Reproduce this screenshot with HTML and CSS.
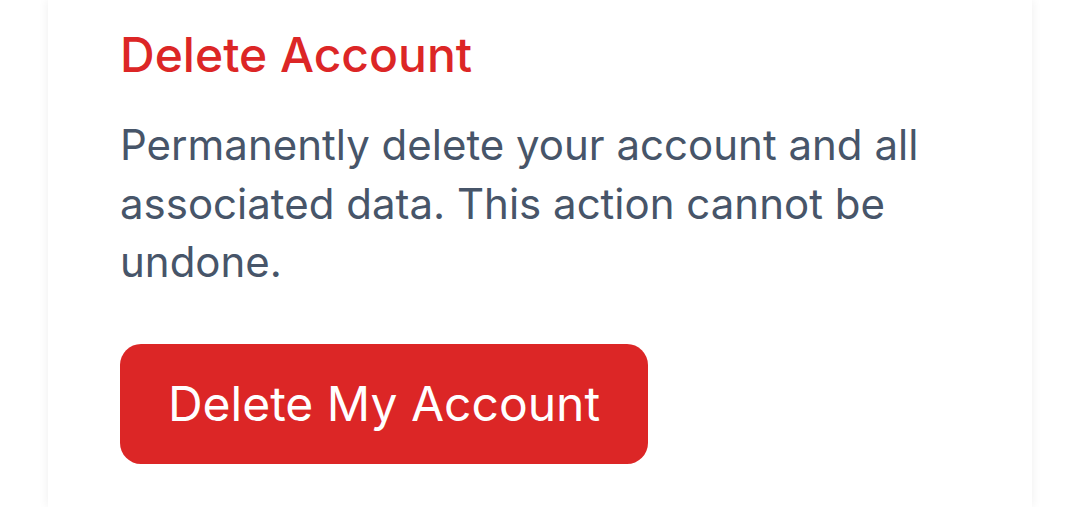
FILE: index.html
```html
<!DOCTYPE html>
<html lang="en">
<head>
<meta charset="utf-8">
<title>Delete Account</title>
<link rel="stylesheet" href="styles.css">
</head>
<body>
<div class="page">
  <section class="card">
    <h2 class="title">Delete Account</h2>
    <p class="desc">Permanently delete your account and all associated data. This action cannot be undone.</p>
    <button class="danger-btn" type="button">Delete My Account</button>
  </section>
</div>
</body>
</html>
```
FILE: styles.css
```css
html, body {
  margin: 0;
  padding: 0;
  background: #ffffff;
  height: 100%;
  overflow: hidden;
}
.page {
  padding: 0 48px;
  height: 100%;
  box-sizing: border-box;
}
.card {
  background: #ffffff;
  height: 100%;
  box-sizing: border-box;
  padding: 27px 72px 0 72px;
  box-shadow: 0 0 10px rgba(0, 0, 0, 0.07);
  font-family: Inter, "Noto Sans", sans-serif;
}
.title {
  margin: 0;
  font-size: 48px;
  line-height: 56px;
  font-weight: 500;
  color: #dc2626;
}
.desc {
  margin: 33px 0 0 0;
  font-size: 42px;
  line-height: 58.5px;
  color: #475569;
  max-width: 840px;
}
.danger-btn {
  margin-top: 52px;
  display: flex;
  align-items: center;
  justify-content: center;
  width: 528px;
  height: 120px;
  border: 0;
  border-radius: 21px;
  background: #dc2626;
  color: #ffffff;
  font-family: Inter, "Noto Sans", sans-serif;
  font-size: 48px;
  font-weight: 400;
  padding: 0;
}
```
